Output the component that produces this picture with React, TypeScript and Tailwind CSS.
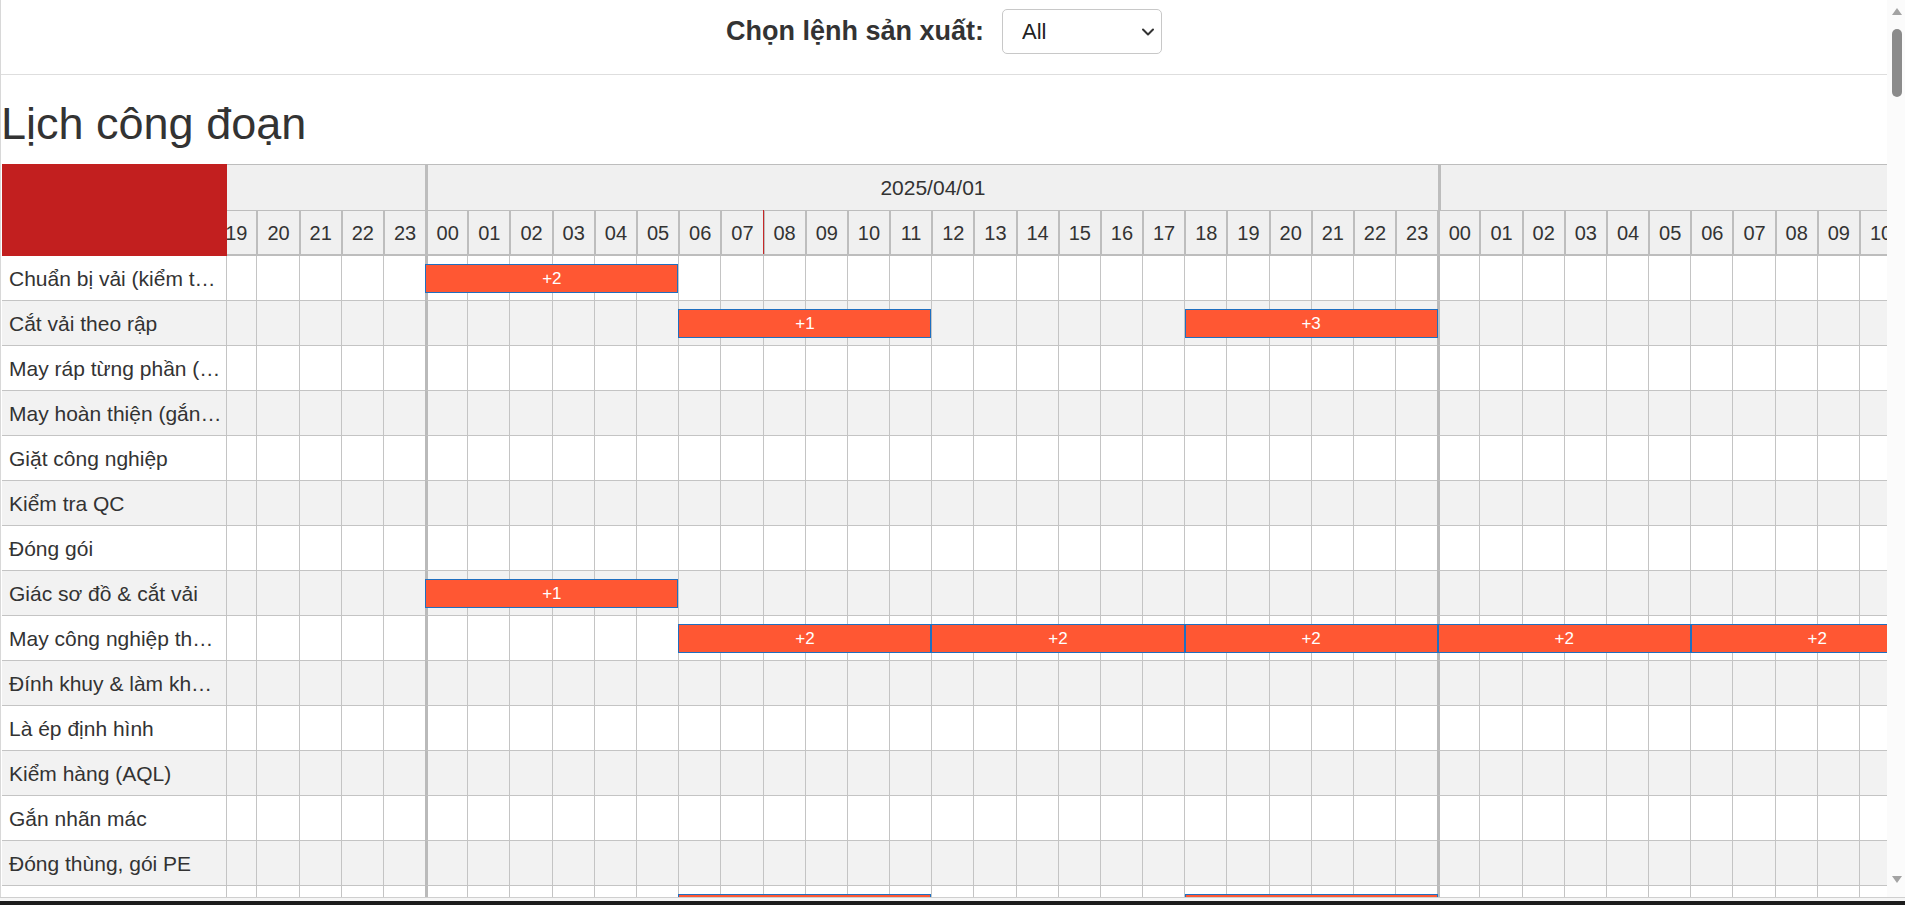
import { ChevronDown } from "lucide-react";

// one hour column, in px (the picture is at ~125% zoom)
const W = 42.18;

const days = ["2025/03/31", "2025/04/01", "2025/04/02"];
const hours = Array.from({ length: 24 }, (_, i) => String(i).padStart(2, "0"));

type Bar = { at: number; label: string };
type Stage = { name: string; bars: Bar[] };

const stages: Stage[] = [
	{ name: "Chuẩn bị vải (kiểm tra, xả vải)", bars: [{ at: 24, label: "+2" }] },
	{
		name: "Cắt vải theo rập",
		bars: [
			{ at: 30, label: "+1" },
			{ at: 42, label: "+3" },
		],
	},
	{ name: "May ráp từng phần (thân, tay, cổ)", bars: [] },
	{ name: "May hoàn thiện (gắn cúc, viền cổ)", bars: [] },
	{ name: "Giặt công nghiệp", bars: [] },
	{ name: "Kiểm tra QC", bars: [] },
	{ name: "Đóng gói", bars: [] },
	{ name: "Giác sơ đồ & cắt vải", bars: [{ at: 24, label: "+1" }] },
	{
		name: "May công nghiệp theo chuyền",
		bars: [30, 36, 42, 48, 54].map((at) => ({ at, label: "+2" })),
	},
	{ name: "Đính khuy & làm khuyết", bars: [] },
	{ name: "Là ép định hình", bars: [] },
	{ name: "Kiểm hàng (AQL)", bars: [] },
	{ name: "Gắn nhãn mác", bars: [] },
	{ name: "Đóng thùng, gói PE", bars: [] },
	{
		name: "Xuất kho thành phẩm",
		bars: [
			{ at: 30, label: "+1" },
			{ at: 42, label: "+1" },
		],
	},
];

const TimelineHeader = () => (
	<div className="flex">
		<div className="w-[225px] h-[92px] shrink-0 bg-[#c21f1f]" />
		<div className="flex-1 min-w-0 overflow-hidden">
			<div className="-ml-[814px]">
				<div className="flex">
					{days.map((d) => (
						<div
							key={d}
							className="w-[1012.32px] h-[46px] shrink-0 flex items-center justify-center bg-[#f0f0f0] border-t border-t-[#bdbdbd] border-l-[3px] border-l-[#bdbdbd] text-[21px]"
						>
							{d}
						</div>
					))}
				</div>
				<div className="flex relative">
					{days.map((d) =>
						hours.map((h) => (
							<div
								key={d + h}
								className={`w-[42.18px] h-[46px] shrink-0 flex items-center justify-center bg-[#f0f0f0] border-t border-b-2 border-[#bdbdbd] text-[20px] ${
									h === "00" ? "border-l-[3px]" : "border-l-2"
								}`}
							>
								{h}
							</div>
						)),
					)}
					{/* now marker */}
					<div
						className="absolute top-0 bottom-[2px] w-px bg-[#c62828]"
						style={{ left: 32 * W }}
					/>
				</div>
			</div>
		</div>
	</div>
);

const StageRow = ({ stage, odd }: { stage: Stage; odd: boolean }) => (
	<div className={`flex h-[45px] ${odd ? "bg-[#f2f2f2]" : "bg-white"}`}>
		<div className="w-[225px] shrink-0 pl-[7px] pr-[4px] border-r border-b border-[#c4c4c4] text-[21px] leading-[46px] truncate">
			{stage.name}
		</div>
		<div className="flex-1 min-w-0 overflow-hidden">
			<div className="-ml-[814px] flex h-full relative">
				{days.map((d) =>
					hours.map((h) => (
						<div
							key={d + h}
							className={`w-[42.18px] h-full shrink-0 border-b border-b-[#c4c4c4] ${
								h === "00"
									? "border-l-[3px] border-l-[#bababa]"
									: "border-l border-l-[#c4c4c4]"
							}`}
						/>
					)),
				)}
				{stage.bars.map((bar) => (
					<div
						key={bar.at}
						className="absolute top-[8px] h-[29px] flex items-center justify-center bg-[#ff5733] border border-[#1f6fc0] text-white text-[17px]"
						style={{ left: bar.at * W, width: 6 * W }}
					>
						{bar.label}
					</div>
				))}
			</div>
		</div>
	</div>
);

const Scrollbar = () => (
	<div className="w-[18px] shrink-0 bg-[#fbfbfb] flex flex-col items-center pl-[2px]">
		<svg width="10" height="7" viewBox="0 0 10 7" className="mt-[8px]">
			<polygon points="5,0 10,7 0,7" fill="#a3a3a3" />
		</svg>
		<div className="mt-[14px] w-[10px] h-[68px] rounded-full bg-[#8b8b8b]" />
		<div className="flex-1" />
		<svg width="10" height="7" viewBox="0 0 10 7" className="mb-[14px]">
			<polygon points="0,0 10,0 5,7" fill="#a3a3a3" />
		</svg>
	</div>
);

export default function App() {
	return (
		<div className="h-screen flex flex-col overflow-hidden bg-white text-[#333] font-['Liberation_Sans',Arial,sans-serif]">
			<div className="flex flex-1 min-h-0 border-l border-[#d8d8d8]">
				<main className="flex-1 min-w-0 overflow-hidden">
					<div className="h-[75px] border-b border-[#dedede] flex items-start justify-center gap-[18px] pt-[9px]">
						<label className="h-[45px] flex items-center font-bold text-[27px]">
							Chọn lệnh sản xuất:
						</label>
						<div className="relative">
							<select className="appearance-none w-[160px] h-[45px] pl-[19px] bg-white border border-[#c8c8c8] rounded-[5px] text-[22px] text-[#222]">
								<option>All</option>
							</select>
							<ChevronDown
								size={20}
								strokeWidth={2.4}
								className="absolute right-[4px] top-[13px] text-[#333] pointer-events-none"
							/>
						</div>
					</div>

					<h1 className="mt-[24px] mb-[15px] text-[45px] leading-[50px] font-normal">
						Lịch công đoạn
					</h1>

					<div className="pl-[1px]">
						<TimelineHeader />
						{stages.map((s, i) => (
							<StageRow key={s.name} stage={s} odd={i % 2 === 1} />
						))}
					</div>
				</main>
				<Scrollbar />
			</div>
			<div className="h-[4px] border-t border-[#cfcfcf] bg-[#f5f5f5]" />
			<div className="h-[4px] bg-[#1c1c1c]" />
		</div>
	);
}
